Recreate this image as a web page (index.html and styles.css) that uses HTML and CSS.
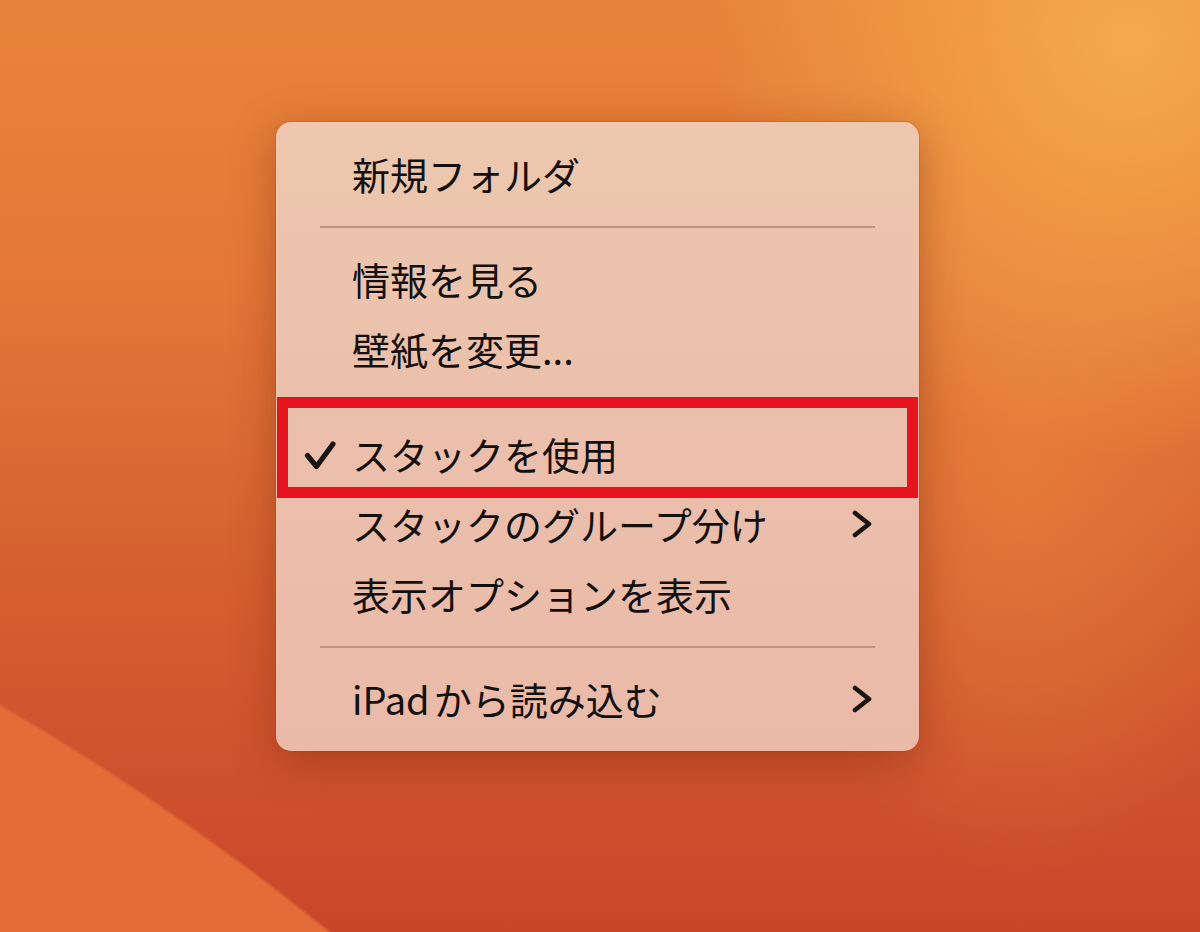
FILE: index.html
```html
<!DOCTYPE html>
<html lang="ja">
<head>
<meta charset="utf-8">
<title>Desktop context menu</title>
<link rel="stylesheet" href="styles.css">
</head>
<body>
<div class="desktop">
  <div class="menu">
    <div class="item"><span class="mark"></span><span class="label">新規フォルダ</span></div>
    <div class="sep"></div>
    <div class="item"><span class="mark"></span><span class="label">情報を見る</span></div>
    <div class="item"><span class="mark"></span><span class="label">壁紙を変更...</span></div>
    <div class="sep"></div>
    <div class="item">
      <span class="mark">
        <svg class="check" width="34" height="34" viewBox="0 0 34 34"><path d="M4.5 18.5 L13.5 29.5 L30 7" fill="none" stroke="#1a1412" stroke-width="5.2" stroke-linecap="round" stroke-linejoin="round"/></svg>
      </span>
      <span class="label">スタックを使用</span>
      <span class="highlight"></span>
    </div>
    <div class="item">
      <span class="mark"></span>
      <span class="label">スタックのグループ分け</span>
      <svg class="chevron" width="20" height="32" viewBox="0 0 20 32"><path d="M3 5 L17 16 L3 27" fill="none" stroke="#1a1412" stroke-width="4.6" stroke-linecap="round" stroke-linejoin="round"/></svg>
    </div>
    <div class="item"><span class="mark"></span><span class="label">表示オプションを表示</span></div>
    <div class="sep"></div>
    <div class="item">
      <span class="mark"></span>
      <span class="label"><span class="latin">iPad</span>から読み込む</span>
      <svg class="chevron" width="20" height="32" viewBox="0 0 20 32"><path d="M3 5 L17 16 L3 27" fill="none" stroke="#1a1412" stroke-width="4.6" stroke-linecap="round" stroke-linejoin="round"/></svg>
    </div>
  </div>
</div>
</body>
</html>
```
FILE: styles.css
```css
html, body {
  margin: 0;
  padding: 0;
  width: 1200px;
  height: 932px;
  overflow: hidden;
}

.desktop {
  position: relative;
  width: 1200px;
  height: 932px;
  font-family: "Noto Sans CJK JP", "Noto Sans", sans-serif;
  background:
    radial-gradient(circle 2554px at -1277px 2915px, #e36b36 0, #e46d37 99.85%, rgba(228,109,55,0) 100%),
    radial-gradient(circle 420px at 1130px 40px, rgba(246,172,76,0.95) 0, rgba(246,172,76,0) 100%),
    radial-gradient(ellipse 260px 420px at 1020px 460px, rgba(236,140,64,0.55) 0, rgba(236,140,64,0) 100%),
    linear-gradient(180deg, #e8843a 0%, #e37838 30%, #d65f30 62%, #c8472b 100%);
}

.menu {
  position: absolute;
  left: 276px;
  top: 122px;
  width: 643px;
  box-sizing: border-box;
  padding: 17px 0;
  border-radius: 15px;
  background: linear-gradient(180deg, #edc7ae 0%, #ebbfab 55%, #e9baa8 100%);
  box-shadow: 0 10px 44px rgba(110, 35, 10, 0.4), 0 0 0 1px rgba(150, 70, 30, 0.2);
  color: #141010;
}

.item {
  position: relative;
  display: flex;
  align-items: center;
  height: 70px;
  padding: 0 47px 0 27px;
}

.mark {
  flex: none;
  width: 49px;
  height: 70px;
  display: flex;
  align-items: center;
}

.label {
  flex: 1;
  font-size: 38px;
  font-weight: 400;
  line-height: 70px;
  white-space: nowrap;
}

.latin {
  margin-right: 4px;
}

.chevron {
  flex: none;
  display: block;
}

.check {
  display: block;
}

.sep {
  height: 35px;
  display: flex;
  align-items: center;
  padding: 0 44px;
}

.sep::after {
  content: "";
  flex: 1;
  height: 2px;
  background: rgba(160, 110, 90, 0.55);
}

.highlight {
  position: absolute;
  left: 1px;
  right: 1px;
  top: -22px;
  bottom: -9px;
  border: 11px solid #e6141e;
}
```
